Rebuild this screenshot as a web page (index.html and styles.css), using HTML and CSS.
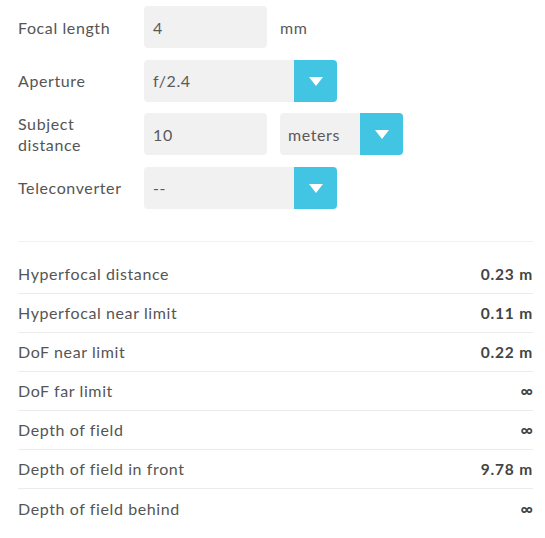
FILE: index.html
```html
<!DOCTYPE html>
<html lang="en">
<head>
<meta charset="utf-8">
<title>Depth of field calculator</title>
<link rel="stylesheet" href="styles.css">
</head>
<body>
<main class="calc">
  <form class="inputs">
    <div class="field">
      <label class="field-label">Focal length</label>
      <div class="text-input">4</div>
      <span class="unit">mm</span>
    </div>
    <div class="field">
      <label class="field-label">Aperture</label>
      <div class="select select-wide">
        <span class="select-value">f/2.4</span>
        <span class="select-btn"><span class="caret"></span></span>
      </div>
    </div>
    <div class="field">
      <label class="field-label">Subject distance</label>
      <div class="text-input">10</div>
      <div class="select select-narrow">
        <span class="select-value">meters</span>
        <span class="select-btn"><span class="caret"></span></span>
      </div>
    </div>
    <div class="field">
      <label class="field-label">Teleconverter</label>
      <div class="select select-wide">
        <span class="select-value">--</span>
        <span class="select-btn"><span class="caret"></span></span>
      </div>
    </div>
  </form>
  <hr class="divider">
  <dl class="results">
    <div class="result"><dt>Hyperfocal distance</dt><dd>0.23 m</dd></div>
    <div class="result"><dt>Hyperfocal near limit</dt><dd>0.11 m</dd></div>
    <div class="result"><dt>DoF near limit</dt><dd>0.22 m</dd></div>
    <div class="result"><dt>DoF far limit</dt><dd class="inf">∞</dd></div>
    <div class="result"><dt>Depth of field</dt><dd class="inf">∞</dd></div>
    <div class="result"><dt>Depth of field in front</dt><dd>9.78 m</dd></div>
    <div class="result"><dt>Depth of field behind</dt><dd class="inf">∞</dd></div>
  </dl>
</main>
</body>
</html>
```
FILE: styles.css
```css
* { box-sizing: border-box; }
html, body { margin: 0; padding: 0; background: #fff; }
body {
  font-family: Lato, "Open Sans", "Liberation Sans", sans-serif;
  font-size: 16px;
  letter-spacing: 0.6px;
  color: #555;
}
.calc {
  width: 545px;
  padding: 6px 12px 0 18px;
}
.inputs {
  display: flex;
  flex-direction: column;
  gap: 11.67px;
}
.field {
  display: flex;
  align-items: center;
  height: 42px;
}
.field-label {
  width: 114px;
  margin-right: 12px;
  line-height: 21px;
  color: #555;
}
.text-input {
  width: 123px;
  height: 42px;
  background: #f1f1f1;
  border-radius: 4px;
  padding-left: 9px;
  display: flex;
  align-items: center;
  color: #5a5a5a;
}
.unit {
  margin-left: 13px;
  color: #5a5a5a;
}
.select {
  height: 42px;
  background: #f1f1f1;
  border-radius: 4px;
  display: flex;
  align-items: center;
  overflow: hidden;
}
.select-wide { width: 193px; }
.select-narrow { width: 123px; margin-left: 13px; }
.select-value {
  flex: 1;
  padding-left: 9px;
  color: #5a5a5a;
}
.select-narrow .select-value { padding-left: 8px; }
.select-btn {
  width: 43px;
  height: 42px;
  background: #42c5e3;
  display: flex;
  align-items: center;
  justify-content: center;
}
.caret {
  width: 0;
  height: 0;
  border-left: 7px solid transparent;
  border-right: 7px solid transparent;
  border-top: 9px solid #fff;
  margin-top: 1px;
}
.divider {
  margin: 32px 0 0;
  border: 0;
  border-top: 1px solid #f1f1f1;
  height: 0;
}
.results {
  margin: 13px 0 0;
}
.result {
  display: flex;
  align-items: center;
  justify-content: space-between;
  height: 39px;
  border-bottom: 1px solid #ececec;
}
.result:last-child { border-bottom: 0; }
.result dt { color: #555; }
.result dd {
  margin: 0;
  font-weight: 700;
  font-size: 15.5px;
  letter-spacing: 0.8px;
  color: #444;
}
.result dd.inf { font-size: 17px; letter-spacing: 0; }
```
